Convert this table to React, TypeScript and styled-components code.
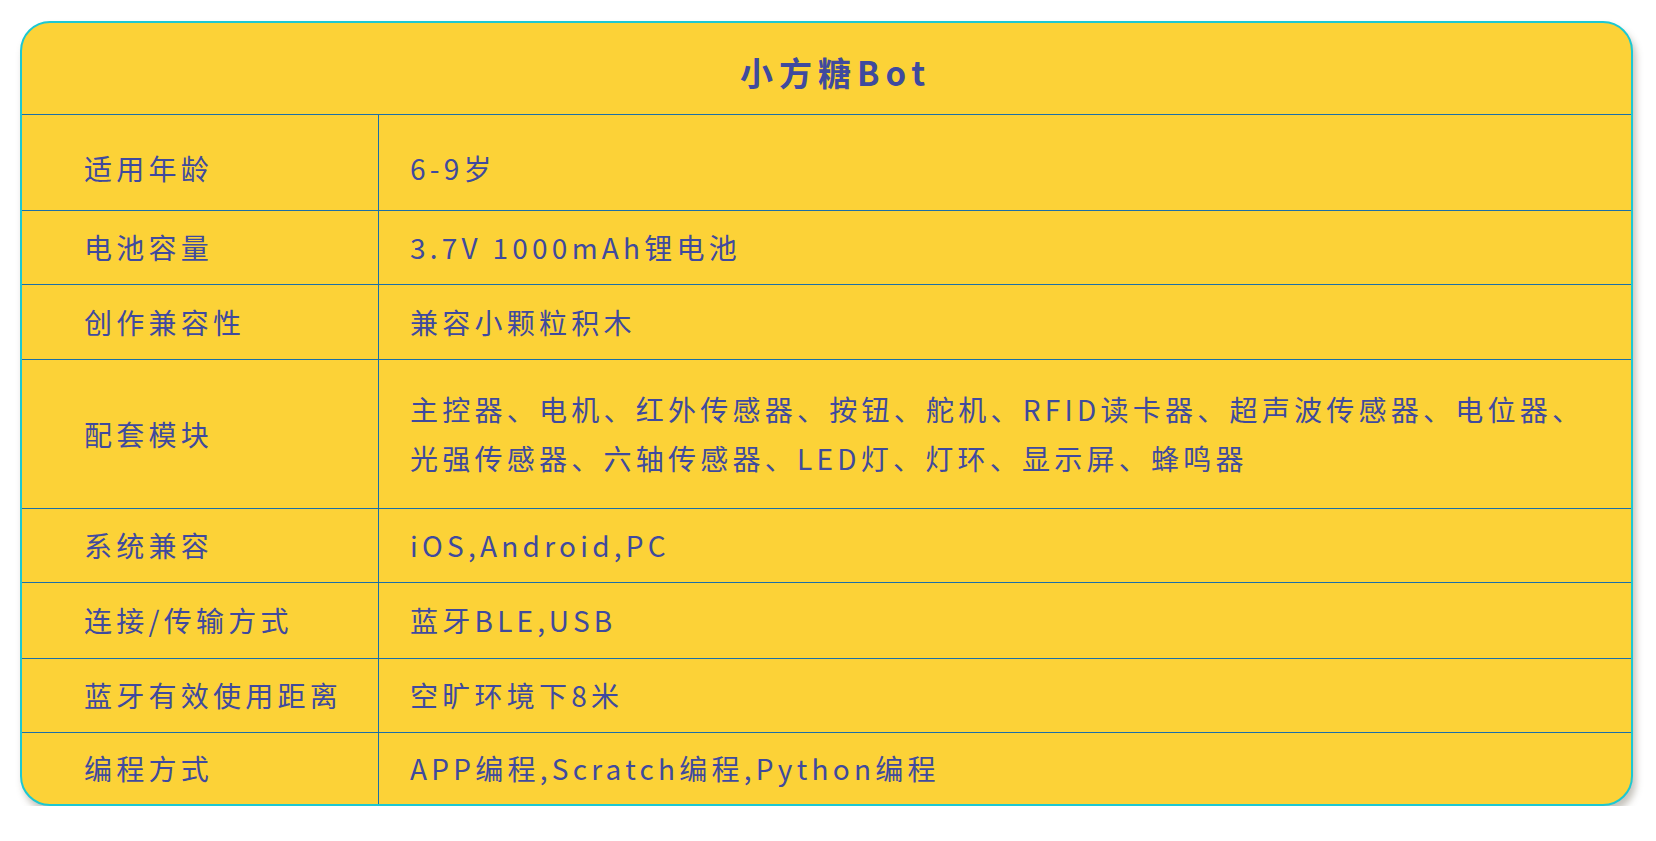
import styled, { createGlobalStyle } from 'styled-components';

const GlobalStyle = createGlobalStyle`
  body {
    margin: 0;
    background: #fff;
    font-family: 'Noto Sans CJK SC', 'Noto Sans', sans-serif;
  }
`;

const Page = styled.div`
  padding: 21px 0 0 20px;
`;

const Card = styled.div`
  width: 1613px;
  box-sizing: border-box;
  background: #fcd237;
  border: 2px solid #1cc8d2;
  border-radius: 30px;
  overflow: hidden;
  box-shadow: 3px 6px 7px rgba(90, 80, 60, 0.35);
  color: #3f4a9e;
`;

const Title = styled.div`
  height: 91px;
  box-sizing: border-box;
  display: flex;
  align-items: center;
  justify-content: center;
  padding: 6px 0 0 18px;
  font-size: 33px;
  font-weight: 700;
  letter-spacing: 6px;
`;

const Row = styled.div<{ $h: number }>`
  display: grid;
  grid-template-columns: 357px 1fr;
  min-height: ${(p) => p.$h}px;
  border-top: 1px solid #1b6fa8;
  box-sizing: border-box;
`;

const Cell = styled.div<{ $top?: number }>`
  display: flex;
  align-items: center;
  padding-top: ${(p) => p.$top ?? 0}px;
  font-size: 28px;
  letter-spacing: 4.25px;
  line-height: 49px;
`;

const Label = styled(Cell)`
  padding-left: 62px;
  border-right: 1px solid #1b6fa8;
`;

const Value = styled(Cell)`
  padding-left: 31px;
  padding-right: 40px;
`;

const rows: [string, string, number, number?][] = [
  ['适用年龄', '6-9岁', 96, 12],
  ['电池容量', '3.7V 1000mAh锂电池', 74],
  ['创作兼容性', '兼容小颗粒积木', 75],
  [
    '配套模块',
    '主控器、电机、红外传感器、按钮、舵机、RFID读卡器、超声波传感器、电位器、光强传感器、六轴传感器、LED灯、灯环、显示屏、蜂鸣器',
    149,
  ],
  ['系统兼容', 'iOS,Android,PC', 74],
  ['连接/传输方式', '蓝牙BLE,USB', 76],
  ['蓝牙有效使用距离', '空旷环境下8米', 74],
  ['编程方式', 'APP编程,Scratch编程,Python编程', 72],
];

export default function App() {
  return (
    <Page>
      <GlobalStyle />
      <Card>
        <Title>小方糖Bot</Title>
        {rows.map(([label, value, h, top]) => (
          <Row key={label} $h={h}>
            <Label $top={top}>{label}</Label>
            <Value $top={top}>{value}</Value>
          </Row>
        ))}
      </Card>
    </Page>
  );
}
